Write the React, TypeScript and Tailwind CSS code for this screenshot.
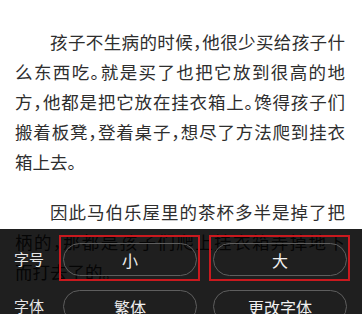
import React from "react";

const font = { fontFamily: '"Noto Sans CJK SC", "Noto Sans", sans-serif' };

const Line: React.FC<{ text: string; indent?: boolean; last?: boolean }> = ({ text, indent, last }) => (
  <div
    className={`whitespace-nowrap h-[30px] leading-[30px] [font-feature-settings:'halt'] ${
      last ? "" : "[text-align-last:justify] text-justify"
    } ${indent ? "pl-[2em]" : ""}`}
  >
    {text}
  </div>
);

const Pill: React.FC<{ label: string; marked?: boolean }> = ({ label, marked }) => (
  <div className="relative flex-1">
    <div className="h-[33px] rounded-full border border-[#5e5e5e] flex items-center justify-center text-[16px] text-[#f0f0f0]">
      {label}
    </div>
    {marked && (
      <span className="absolute -left-[4px] -right-[3px] -top-[8px] -bottom-[5px] border-2 border-[#c9191e] pointer-events-none" />
    )}
  </div>
);

export default function App() {
  return (
    <div className="relative w-[362px] h-[314px] overflow-hidden bg-white" style={font}>
      <div className="pt-[27px] pl-[15px] pr-[17px] text-[17.5px] text-[#2e2e2e]">
        <Line indent text="孩子不生病的时候，他很少买给孩子什" />
        <Line text="么东西吃。就是买了也把它放到很高的地" />
        <Line text="方，他都是把它放在挂衣箱上。馋得孩子们" />
        <Line text="搬着板凳，登着桌子，想尽了方法爬到挂衣" />
        <Line last text="箱上去。" />
        <div className="h-[20px]" />
        <Line indent text="因此马伯乐屋里的茶杯多半是掉了把" />
        <Line text="柄的，那都是孩子们爬上挂衣箱弄掉地下" />
        <Line last text="而打去了的。" />
      </div>

      <div className="absolute left-0 right-0 top-[229px] bottom-0 bg-black/[0.88] pt-[14px] pr-[15px]">
        <div className="flex items-center">
          <div className="w-[63px] pl-[14px] text-[15px] text-[#e6e6e6]">字号</div>
          <div className="flex flex-1 gap-[16px]">
            <Pill label="小" marked />
            <Pill label="大" marked />
          </div>
        </div>
        <div className="flex items-center mt-[14px]">
          <div className="w-[63px] pl-[14px] text-[15px] text-[#e6e6e6]">字体</div>
          <div className="flex flex-1 gap-[16px]">
            <Pill label="繁体" />
            <Pill label="更改字体" />
          </div>
        </div>
      </div>
    </div>
  );
}
